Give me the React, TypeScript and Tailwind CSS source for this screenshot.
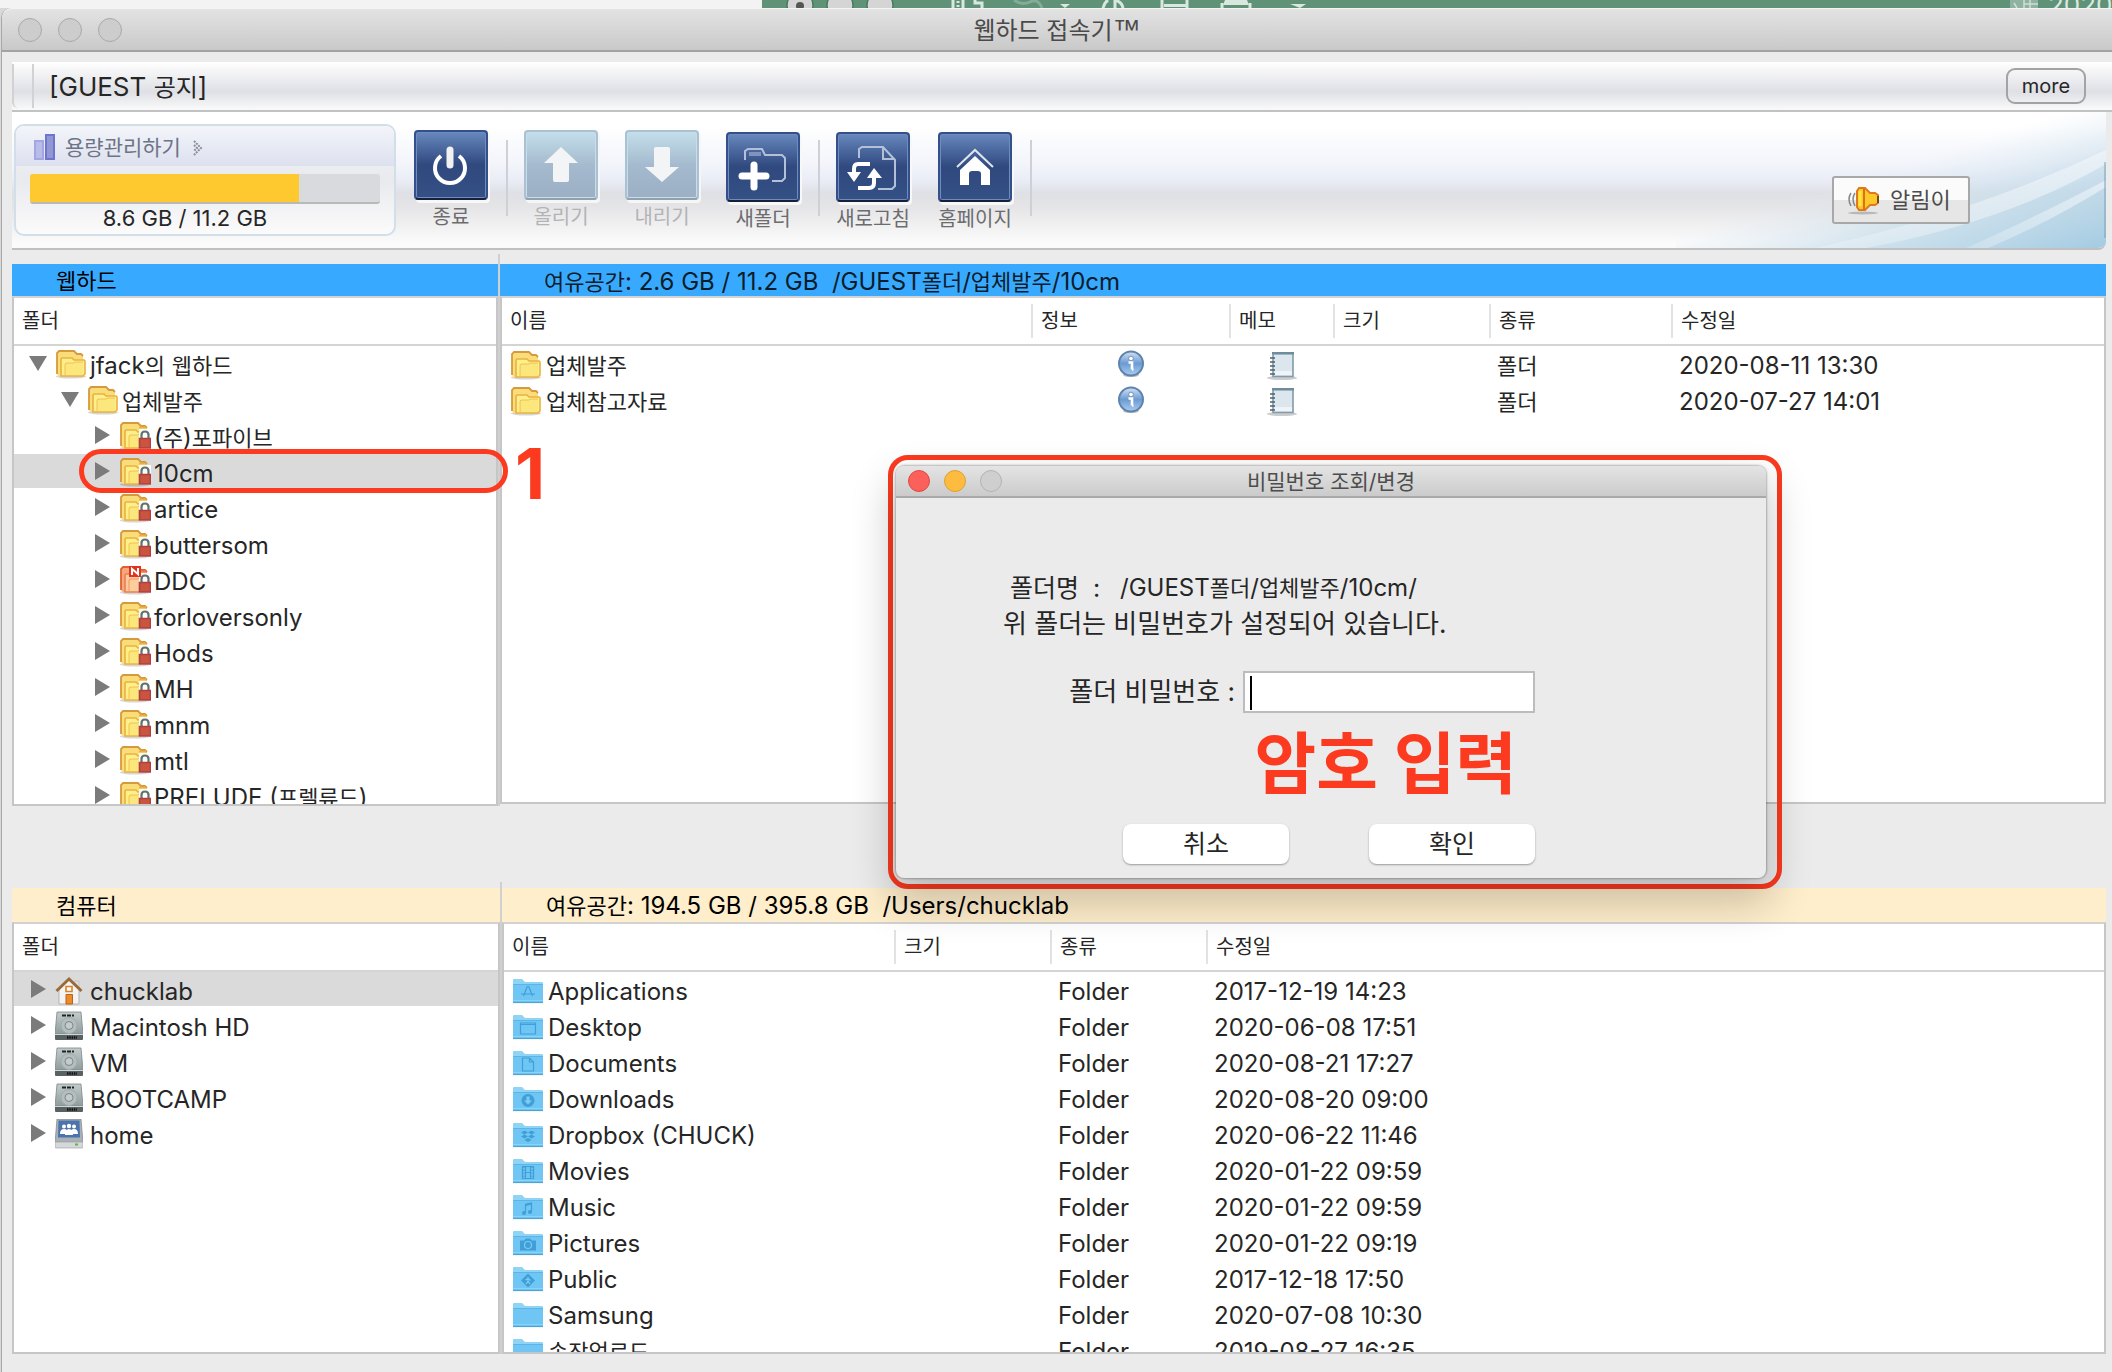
import React from 'react';

const KO = /([\uac00-\ud7a3]+)/;

/** Latin text keeps the parent's size; Hangul runs are set two pixels smaller. */
function Mixed({ text, ko = 'text-[22px] leading-none' }: { text: string; ko?: string }) {
  return (
    <span className="whitespace-pre">
      {text.split(KO).map((part, i) =>
        KO.test(part) ? (
          <span key={i} className={ko}>
            {part}
          </span>
        ) : (
          part
        ),
      )}
    </span>
  );
}

/* ---------- small icons ---------- */

function YellowFolder({ locked = false, fresh = false }: { locked?: boolean; fresh?: boolean }) {
  const edge = fresh ? '#e0602f' : '#d59a3c';
  const fill = fresh ? '#f8a77c' : '#fbdc7a';
  const front = fresh ? '#fcc9a4' : '#fdf08c';
  const mid = fresh ? '#ee7f4c' : '#e9b23f';
  return (
    <svg width="32" height="30" viewBox="0 0 32 30" className="mt-1 shrink-0" aria-hidden="true">
      <ellipse cx="16" cy="26.500" rx="15" ry="2" fill="#000" opacity=".16" />
      <path d="M2 24V3l2-2h15l3 3h4l2 2v17l-2 3H4z" fill={fill} />
      <path d="M2 24V3l2-2h15l3 3h4l2 2" fill="none" stroke={edge} strokeWidth="1.800" />
      <path d="M6 26V9l1-1h10l2 2h10l1 1v13l-2 2z" fill={front} stroke={mid} strokeWidth="1.600" />
      <path d="M10 25V14l1-1h8l1-1h8v13z" fill="#fbe57a" opacity={fresh ? '.2' : '.9'} />
      <path d="M10 25V14l1-1h8l1-1h8" fill="none" stroke={mid} strokeWidth="1" opacity=".7" />
      {locked && (
        <g>
          <path d="M20 7h12v20H20z" fill="#fff" opacity=".9" />
          <path d="M20 5.500h7" stroke={mid} strokeWidth="1.800" />
          <path d="M22.500 17v-4q0-3.500 3.500-3.500t3.500 3.500v4" fill="none" stroke="#5c7478" strokeWidth="2.200" />
          <path d="M20.500 16.500h11v9.500h-11z" fill="#c9553f" stroke="#b03e44" strokeWidth="1.600" />
        </g>
      )}
      {fresh && (
        <g>
          <path d="M10 0h12v11H10z" fill="#e0341f" />
          <path d="M13 9V3l6 5V2" fill="none" stroke="#fff" strokeWidth="2" />
        </g>
      )}
    </svg>
  );
}

const glyphs: Record<string, React.ReactNode> = {
  Applications: <path d="M14.500 6.500l-4 10M15.500 6.500l4 10M8 14.500h14" />,
  Desktop: <path d="M7.500 7.500h15v11h-15zM7.500 9h15" />,
  Documents: <path d="M9.500 6.500h7l4 4v9h-11zM16.500 6.500v4h4" />,
  Downloads: (
    <g>
      <circle cx="15" cy="13" r="6.500" fill="#3f9fd6" stroke="none" />
      <path d="M15 9v4.500" stroke="#7ccbf5" strokeWidth="3" />
      <path d="M11 13h8l-4 4z" fill="#7ccbf5" stroke="none" />
    </g>
  ),
  'Dropbox (CHUCK)': (
    <path
      d="M11.500 7l3.500 2-3.500 2-3.500-2zM18.500 7l3.500 2-3.500 2-3.500-2zM11.500 11l3.500 2-3.500 2-3.500-2zM18.500 11l3.500 2-3.500 2-3.500-2zM11.500 16.500l3.500-2 3.500 2-3.500 2z"
      fill="#3f9fd6"
      stroke="none"
    />
  ),
  Movies: (
    <g>
      <path d="M9.500 7h11v12h-11zM12.500 7v12M17.500 7v12M12.500 13h5" />
      <path d="M11 7v12M19 7v12" strokeDasharray="1.500 1.500" />
    </g>
  ),
  Music: (
    <g>
      <path d="M12.500 17V9l6-1.500V16" />
      <path d="M12.500 9.500l6-1.500" strokeWidth="2" />
      <circle cx="11" cy="17.500" r="2" fill="#3f9fd6" stroke="none" />
      <circle cx="17" cy="16.500" r="2" fill="#3f9fd6" stroke="none" />
    </g>
  ),
  Pictures: (
    <g>
      <path d="M7 9h4l2-2h4l2 2h4v10H7z" fill="#3f9fd6" stroke="none" />
      <circle cx="15" cy="13.500" r="3.500" stroke="#7ccbf5" />
    </g>
  ),
  Public: (
    <g>
      <path d="M15 6l7 7-7 7-7-7z" fill="#3f9fd6" stroke="none" />
      <path d="M15 9.500v4l-2 3M15 13.500l2 3M12.500 12.500l2.500-1.500 2.500 2" stroke="#7ccbf5" />
    </g>
  ),
};

function BlueFolder({ name }: { name: string }) {
  return (
    <svg width="30" height="26" viewBox="0 0 30 26" className="mt-0.5 shrink-0" aria-hidden="true">
      <path d="M0 24V2q0-1 1-1h8l3 3h17q1 0 1 1v19z" fill="#8fd3f5" />
      <path d="M0 7h30v17q0 1-1 1H1q-1 0-1-1z" fill="#6fc6f4" />
      <path d="M0 22.500h30" stroke="#8ad4fb" strokeWidth="1" />
      <path d="M0 24.500h30" stroke="#4ea3cf" strokeWidth="1.200" />
      <path d="M0 6.500h30" stroke="#5bb5e6" strokeWidth="1" />
      <g transform="translate(0 1.500)" fill="none" stroke="#3f9fd6" strokeWidth="1.200">
        {glyphs[name]}
      </g>
    </svg>
  );
}

function InfoIcon() {
  return (
    <svg width="28" height="28" viewBox="0 0 28 28" aria-hidden="true">
      <defs>
        <linearGradient id="info" x1="0" y1="0" x2="0" y2="1">
          <stop offset="0" stopColor="#d2e2f4" />
          <stop offset=".5" stopColor="#6c9bd2" />
          <stop offset="1" stopColor="#a9cdf0" />
        </linearGradient>
      </defs>
      <ellipse cx="14" cy="25" rx="8" ry="2" fill="#000" opacity=".25" />
      <circle cx="14" cy="13.500" r="12" fill="url(#info)" stroke="#5f83ad" strokeWidth="2" />
      <circle cx="14" cy="8.500" r="2.300" fill="#fff" stroke="#5f83ad" strokeWidth=".8" />
      <path d="M11.500 12.500h3.500v7M15 19.500h1.500" stroke="#fff" strokeWidth="2.600" fill="none" />
    </svg>
  );
}

function MemoIcon() {
  return (
    <svg width="32" height="30" viewBox="0 0 32 30" aria-hidden="true">
      <ellipse cx="16" cy="27" rx="15" ry="2" fill="#000" opacity=".2" />
      <path d="M7 2.500h20v23H7z" fill="#dbe6ed" stroke="#7f9dae" strokeWidth="1.600" />
      <path d="M6 2.200h22" stroke="#6f8c9c" strokeWidth="2.400" />
      <path d="M9 20h17v4H9z" fill="#eef4f7" />
      <path d="M4 7h5M4 11h5M4 15h5M4 19h5M4 23h5" stroke="#50626d" strokeWidth="1.500" />
    </svg>
  );
}

function HomeIcon() {
  return (
    <svg width="28" height="30" viewBox="0 0 28 30" className="mt-1 shrink-0" aria-hidden="true">
      <path d="M20 5h4v6h-4z" fill="#ddd" stroke="#bbb" strokeWidth=".6" />
      <path d="M4 14L14 4l10 10v14H4z" fill="#f4f4f4" stroke="#b5b5b5" strokeWidth="1" />
      <path d="M1.500 15L14 3l12.500 12" fill="none" stroke="#9a6a3a" strokeWidth="3" />
      <path d="M11 10.500h6v5h-6z" fill="#fff" stroke="#d9822b" strokeWidth="1.600" />
      <path d="M11 18.500h6.500V28H11z" fill="#ee8a2a" stroke="#b8651c" strokeWidth="1" />
    </svg>
  );
}

function DiskIcon() {
  return (
    <svg width="28" height="30" viewBox="0 0 28 30" className="mt-0.5 shrink-0" aria-hidden="true">
      <defs>
        <linearGradient id="disk" x1="0" y1="0" x2="0" y2="1">
          <stop offset="0" stopColor="#c3cccd" />
          <stop offset="1" stopColor="#8f9b9c" />
        </linearGradient>
      </defs>
      <path d="M2 1h24l2 22H0z" fill="url(#disk)" stroke="#7c8687" strokeWidth=".8" />
      <path d="M0 23h28v5q0 1-1 1H1q-1 0-1-1z" fill="#5a6162" />
      <path d="M0 23.500h28" stroke="#cfd6d7" />
      <path d="M7 4.500h12" stroke="#222" strokeWidth="2" strokeDasharray="4 1" />
      <circle cx="14" cy="14.500" r="8" fill="#b4bebf" stroke="#a0abac" />
      <circle cx="14" cy="14.500" r="4" fill="#c3cbcc" stroke="#7c8687" />
      <path d="M12 26.500h10" stroke="#111" strokeWidth="2.500" strokeDasharray="1.500 .8" />
    </svg>
  );
}

function ShareDiskIcon() {
  return (
    <svg width="28" height="30" viewBox="0 0 28 30" className="mt-0.5 shrink-0" aria-hidden="true">
      <path d="M2 0h24l2 24H0z" fill="#a9b0b6" stroke="#858c92" strokeWidth=".8" />
      <path d="M3.500 1.500h21l.5 17H3z" fill="#4a74ab" />
      <path d="M0 23h28v5q0 1-1 1H1q-1 0-1-1z" fill="#d5d8da" stroke="#999" strokeWidth=".6" />
      <g fill="#fff">
        <circle cx="9" cy="7.500" r="2" />
        <circle cx="14" cy="7" r="2.200" />
        <circle cx="19" cy="7.500" r="2" />
        <path d="M5 15q0-5 4-5t4 5zM15 15q0-5 4-5t4 5zM10 16q0-6 4-6t4 6z" />
      </g>
      <path d="M20 25.500h3" stroke="#5fb548" strokeWidth="2" />
    </svg>
  );
}

function Triangle({ open }: { open?: boolean }) {
  return (
    <svg width="18" height="18" viewBox="0 0 18 18" className="shrink-0" aria-hidden="true">
      <path d={open ? 'M0 2h18L9 17z' : 'M2 0v18l15-9z'} fill="#7b7b7b" />
    </svg>
  );
}

/* ---------- window chrome ---------- */

function Light({ className }: { className: string }) {
  return <span className={`block rounded-full border ${className}`} />;
}

function BackgroundWindow() {
  return (
    <div className="flex h-2 shrink-0 overflow-hidden bg-[#f3f3f3]" aria-hidden="true">
      <div className="w-[762px] shrink-0" />
      <div className="flex flex-1 justify-between overflow-hidden bg-[#5f9277]">
        <svg width="560" height="8" viewBox="0 0 560 8">
          <g fill="#d5d5d5" stroke="#497a60" strokeWidth="1.500">
            <circle cx="38" cy="5" r="13" />
            <circle cx="78" cy="5" r="13" />
            <circle cx="118" cy="5" r="13" />
          </g>
          <circle cx="38" cy="6" r="4" fill="#555" />
          <g fill="none" stroke="#d9e8df" strokeWidth="3">
            <path d="M191 0v8M201 8V0M213 0v3h7v5" />
            <path d="M196 1v7" strokeDasharray="2 2" />
            <path d="M252 0q8 6 16 2t12 6" opacity=".3" />
            <path d="M341 8q1-5 5-8M361 8q-1-6-8-8v8" />
            <path d="M400 0v8M425 0v8M402 5.500h22" />
            <path d="M460 8V3M488 8V3" />
          </g>
          <path d="M463 0h22l2 5h-26z" fill="#d9e8df" />
          <path d="M298 4h10l-5 4zM528 4h16l-6 4z" fill="#d9e8df" />
        </svg>
        <div className="flex">
          <svg width="28" height="8" viewBox="0 0 28 8">
            <path d="M0 0h28v8H0z" fill="#8fb3a0" />
            <path d="M4 3l3 5M14 0v8M20 0v8M14 4h14" stroke="#cfe0d6" strokeWidth="1.500" />
          </svg>
          <span className="w-[74px] overflow-hidden pl-2.5 text-[26px] leading-[10px] text-[#dbe8e0]">2020</span>
        </div>
      </div>
    </div>
  );
}

/* ---------- toolbar ---------- */

type ToolProps = { label: string; disabled?: boolean; low?: boolean; children: React.ReactNode };

function Tool({ label, disabled, low, children }: ToolProps) {
  return (
    <button
      type="button"
      disabled={disabled}
      className={`flex w-[74px] flex-col items-center ${low ? 'mt-5' : 'mt-[18px]'}`}
    >
      <span
        className={
          disabled
            ? 'block h-[70px] w-[74px] rounded-[4px] border-2 border-[#a9c1d2] border-b-[#8fa0af] bg-linear-to-b from-[#c3dfea] via-[#a5bace] to-[#9cafc4] shadow-[inset_0_0_0_1px_#c8dde8,2px_3px_0_#f6f6f6]'
            : 'block h-[70px] w-[74px] rounded-[4px] border-2 border-[#34508c] border-b-[#16203c] bg-linear-to-b from-[#6788be] via-[#30497f] to-[#345084] shadow-[inset_0_0_0_1px_#6f8cbb,2px_3px_0_#f8f8f8]'
        }
      >
        <svg width="70" height="66" viewBox="0 0 70 66" aria-hidden="true">
          {children}
        </svg>
      </span>
      <span
        className={`mt-[5px] text-[20px] leading-6 whitespace-nowrap ${disabled ? 'text-[#b3b3b5]' : 'text-[#6c6c6e]'}`}
      >
        {label}
      </span>
    </button>
  );
}

function Separator() {
  return <div className="mr-4 ml-[18px] mt-7 h-[76px] w-0.5 bg-[#cfd0d5]" />;
}

function Capacity() {
  return (
    <section className="ml-0.5 mt-3 h-28 w-[382px] overflow-hidden rounded-[10px] border-2 border-[#d3dfe8] bg-linear-to-b from-[#f4f5f9] via-[#e9eaee] to-[#fbfbfb]">
      <div className="flex h-10 items-center bg-linear-to-b from-[#f3f5fa] to-[#dde1ee] pt-1 pl-[17px]">
        <svg width="24" height="30" viewBox="0 0 24 30" aria-hidden="true">
          <path d="M2 8h8v18H2z" fill="#b9bbe8" stroke="#a3a6e2" strokeWidth="2" />
          <path d="M13 2h8v24h-8z" fill="#9197d5" stroke="#6f75cc" strokeWidth="2" />
        </svg>
        <a href="#capacity" className="ml-2 flex items-center text-[21px] leading-6 text-[#6d7487]">
          용량관리하기
          <svg width="10" height="16" viewBox="0 0 10 16" className="ml-3" aria-hidden="true">
            <path d="M1 1l7 7-7 7M1 5l3 3-3 3" fill="none" stroke="#8b8f99" strokeWidth="2" strokeDasharray="2 1" />
          </svg>
        </a>
      </div>
      <div
        role="progressbar"
        aria-label="용량"
        aria-valuenow={8.6}
        aria-valuemax={11.2}
        className="mx-3.5 mt-2 h-[30px] overflow-hidden rounded-[3px] border-b-2 border-[#b9b9bb] bg-[#d9dadd]"
      >
        <div className="h-full bg-[#fec92f]" style={{ width: `${(8.6 / 11.2) * 100}%` }} />
      </div>
      <p className="mt-0.5 pr-10 text-center text-[22px] leading-6 text-[#262626]">8.6 GB / 11.2 GB</p>
    </section>
  );
}

function Toolbar() {
  return (
    <div className="relative mr-1.5 ml-3 flex h-[138px] shrink-0 items-start overflow-hidden rounded-br-lg border-b-2 border-[#bfc0c2] bg-[linear-gradient(#fff_10%,#f3f5fb_38%,#e9ecf5_51%,#dfe0e5_60%,#e5e5e7_70%,#fbfbfb_96%)]">
      <svg className="absolute right-0 bottom-0" width="430" height="136" viewBox="0 0 430 136" aria-hidden="true">
        <defs>
          <linearGradient id="sky" x1="0" y1="0" x2="1" y2="1">
            <stop offset=".45" stopColor="#dfeaf3" stopOpacity="0" />
            <stop offset=".72" stopColor="#c5dcea" stopOpacity=".85" />
            <stop offset="1" stopColor="#a3cbe2" />
          </linearGradient>
          <linearGradient id="ray" x1="0" y1="0" x2="1" y2="0">
            <stop offset="0" stopColor="#fff" stopOpacity=".2" />
            <stop offset="1" stopColor="#f4f7fb" stopOpacity=".6" />
          </linearGradient>
        </defs>
        <path d="M0 0h430v136H0z" fill="url(#sky)" />
        <path d="M140 136Q300 100 430 38v14Q330 110 190 136z" fill="url(#ray)" />
        <path d="M290 136Q370 100 430 68v7Q370 112 312 136z" fill="url(#ray)" />
        <path d="M429 50v76" stroke="#7f9fb8" strokeWidth="2" opacity=".5" />
      </svg>
      <Capacity />
      <div className="ml-[18px] flex">
        <Tool label="종료">
          <path d="M25 24a15 15 0 1 0 18 0" fill="none" stroke="#fff" strokeWidth="4" />
          <path d="M34 18v15" stroke="#f1f1f1" strokeWidth="7" strokeLinecap="round" />
        </Tool>
        <Separator />
        <div className="flex gap-[27px]">
          <Tool label="올리기" disabled>
            <path d="M35 15l17 16h-9v17q0 2-2 2H29q-2 0-2-2V31h-9z" fill="#f3f4f6" />
          </Tool>
          <Tool label="내리기" disabled>
            <path d="M35 50L18 35h9V17q0-2 2-2h12q2 0 2 2v18h9z" fill="#f3f4f6" />
          </Tool>
          <Tool label="새폴더" low>
            <path d="M17 26V17l3-2h14l3 6h17l3 3v20l-3 3H44" fill="none" stroke="#b3c0d8" strokeWidth="2" />
            <path d="M21 20h12" stroke="#7f93bd" strokeWidth="4" />
            <path d="M26 31v22M14 42h24" stroke="#fff" strokeWidth="7" strokeLinecap="round" />
          </Tool>
        </div>
        <Separator />
        <div className="flex gap-7">
          <Tool label="새로고침" low>
            <path d="M21 24v-9l3-2h21l12 13v26l-3 3H40M45 13v12h12" fill="none" stroke="#b3c0d8" strokeWidth="2" />
            <path d="M32 30H20q-4 0-4 5v6M20 54h11q5 0 5-5v-7" fill="none" stroke="#fff" strokeWidth="4" />
            <path d="M9 38h14l-7 10zM29 44h15l-8-10z" fill="#fff" />
          </Tool>
          <Tool label="홈페이지" low>
            <path d="M17 33L35 16l18 17" fill="none" stroke="#dfe5ef" strokeWidth="2" />
            <path d="M35 22l15 14v15h-9V40q0-3-3-3h-6q-3 0-3 3v11h-9V36z" fill="#fff" />
          </Tool>
        </div>
        <Separator />
      </div>
      <button
        type="button"
        className="relative mt-16 mr-[136px] ml-auto flex h-12 w-[138px] items-center gap-2.5 rounded-[3px] border-2 border-[#a8a8a8] bg-linear-to-b from-[#fbfbfb] from-50% to-[#e6e6e6] to-50% pl-3 text-[22px] leading-6 text-[#4c4c4c]"
      >
        <svg width="34" height="32" viewBox="0 0 34 32" aria-hidden="true">
          <ellipse cx="17" cy="29" rx="15" ry="1.500" fill="#9a9a9a" opacity=".6" />
          <path d="M5 9q-4 6 0 13M9 9q-4 6 0 13" fill="none" stroke="#888" strokeWidth="1.500" />
          <path d="M13 4h6l5 5h5l3 2v8l-3 2h-5l-5 5h-6l-2-3V7z" fill="#fdc92a" stroke="#e0791d" strokeWidth="2" />
          <path d="M18 4v22" stroke="#d9721a" strokeWidth="2" />
          <path d="M14 7v15" stroke="#ffe640" strokeWidth="3" />
          <path d="M32 12v7" stroke="#7a4a12" strokeWidth="2" />
        </svg>
        알림이
      </button>
    </div>
  );
}

/* ---------- trees ---------- */

type Node = {
  name: string;
  level: number;
  open?: boolean;
  selected?: boolean;
  icon: React.ReactNode;
};

const lock = <YellowFolder locked />;

const remoteTree: Node[] = [
  { name: 'jfack의 웹하드', level: 0, open: true, icon: <YellowFolder /> },
  { name: '업체발주', level: 1, open: true, icon: <YellowFolder /> },
  { name: '(주)포파이브', level: 2, icon: lock },
  { name: '10cm', level: 2, selected: true, icon: lock },
  { name: 'artice', level: 2, icon: lock },
  { name: 'buttersom', level: 2, icon: lock },
  { name: 'DDC', level: 2, icon: <YellowFolder locked fresh /> },
  { name: 'forloversonly', level: 2, icon: lock },
  { name: 'Hods', level: 2, icon: lock },
  { name: 'MH', level: 2, icon: lock },
  { name: 'mnm', level: 2, icon: lock },
  { name: 'mtl', level: 2, icon: lock },
  { name: 'PRELUDE (프렐류드)', level: 2, icon: lock },
];

const localTree: Node[] = [
  { name: 'chucklab', level: 0, selected: true, icon: <HomeIcon /> },
  { name: 'Macintosh HD', level: 0, icon: <DiskIcon /> },
  { name: 'VM', level: 0, icon: <DiskIcon /> },
  { name: 'BOOTCAMP', level: 0, icon: <DiskIcon /> },
  { name: 'home', level: 0, icon: <ShareDiskIcon /> },
];

const indent = ['pl-[15px]', 'pl-[47px]', 'pl-[79px]'];

function Tree({ nodes }: { nodes: Node[] }) {
  return (
    <ul className="text-[24px] leading-[34px]">
      {nodes.map((n) => (
        <li key={n.name} className={`mb-0.5 flex h-[34px] items-center ${indent[n.level]} ${n.selected ? 'bg-[#dadada]' : ''}`}>
          <button type="button" aria-label={`${n.name} 펼치기`} aria-expanded={!!n.open} className="mr-2">
            <Triangle open={n.open} />
          </button>
          <span className="flex w-[35px] shrink-0">{n.icon}</span>
          <span className="pt-1.5">
            <Mixed text={n.name} />
          </span>
        </li>
      ))}
    </ul>
  );
}

function TreePane({ title, titleClass, nodes }: { title: string; titleClass: string; nodes: Node[] }) {
  return (
    <>
      <h2 className={`flex shrink-0 items-center pt-0.5 pl-11 text-[22px] leading-8 text-black ${titleClass}`}>{title}</h2>
      <div className="flex min-h-0 flex-1 flex-col overflow-hidden border-2 border-[#c6c6c6] border-t-[#d2d2d2] bg-white">
        <div className="h-12 shrink-0 border-b-2 border-[#d4d4d4] pl-2 text-[20px] leading-[46px]">폴더</div>
        <Tree nodes={nodes} />
      </div>
    </>
  );
}

/* ---------- file tables ---------- */

function HeadCell({ label, first }: { label: string; first?: boolean }) {
  return (
    <th scope="col" className="h-12 border-b-2 border-[#d4d4d4] p-0 text-left text-[20px] font-normal">
      <div className={first ? 'pl-2 leading-[34px]' : 'border-l-2 border-[#e2e2e2] pl-2 leading-[34px]'}>{label}</div>
    </th>
  );
}

function Cell({ children }: { children?: React.ReactNode }) {
  return <td className="p-0 pt-1 pl-2">{children}</td>;
}

const remoteFiles = [
  { name: '업체발주', date: '2020-08-11 13:30' },
  { name: '업체참고자료', date: '2020-07-27 14:01' },
];

const localFiles = [
  { name: 'Applications', date: '2017-12-19 14:23' },
  { name: 'Desktop', date: '2020-06-08 17:51' },
  { name: 'Documents', date: '2020-08-21 17:27' },
  { name: 'Downloads', date: '2020-08-20 09:00' },
  { name: 'Dropbox (CHUCK)', date: '2020-06-22 11:46' },
  { name: 'Movies', date: '2020-01-22 09:59' },
  { name: 'Music', date: '2020-01-22 09:59' },
  { name: 'Pictures', date: '2020-01-22 09:19' },
  { name: 'Public', date: '2017-12-18 17:50' },
  { name: 'Samsung', date: '2020-07-08 10:30' },
  { name: '송장업로드', date: '2019-08-27 16:35' },
];

function RemoteTable() {
  return (
    <table className="w-full table-fixed border-separate border-spacing-0">
      <colgroup>
        <col className="w-[529px]" />
        <col className="w-[198px]" />
        <col className="w-[104px]" />
        <col className="w-[156px]" />
        <col className="w-[182px]" />
        <col />
      </colgroup>
      <thead>
        <tr>
          <HeadCell label="이름" first />
          <HeadCell label="정보" />
          <HeadCell label="메모" />
          <HeadCell label="크기" />
          <HeadCell label="종류" />
          <HeadCell label="수정일" />
        </tr>
      </thead>
      <tbody className="text-[24px] leading-8">
        {remoteFiles.map((f) => (
          <tr key={f.name} className="h-9">
            <td className="p-0 pl-2">
              <span className="flex h-9 items-center">
                <YellowFolder />
                <span className="ml-1 pt-1">
                  <Mixed text={f.name} />
                </span>
              </span>
            </td>
            <td className="p-0 pl-0.5">
              <span className="flex justify-center">
                <InfoIcon />
              </span>
            </td>
            <td className="p-0 pl-0.5">
              <span className="flex justify-center pt-1">
                <MemoIcon />
              </span>
            </td>
            <Cell />
            <Cell>
              <Mixed text="폴더" />
            </Cell>
            <Cell>{f.date}</Cell>
          </tr>
        ))}
      </tbody>
    </table>
  );
}

function LocalTable() {
  return (
    <table className="w-full table-fixed border-separate border-spacing-0">
      <colgroup>
        <col className="w-[390px]" />
        <col className="w-[156px]" />
        <col className="w-[156px]" />
        <col />
      </colgroup>
      <thead>
        <tr>
          <HeadCell label="이름" first />
          <HeadCell label="크기" />
          <HeadCell label="종류" />
          <HeadCell label="수정일" />
        </tr>
      </thead>
      <tbody className="text-[24px] leading-8">
        {localFiles.map((f) => (
          <tr key={f.name} className="h-9">
            <td className="p-0 pl-[9px]">
              <span className="flex h-9 items-center">
                <BlueFolder name={f.name} />
                <span className="ml-[5px] pt-1">
                  <Mixed text={f.name} />
                </span>
              </span>
            </td>
            <Cell />
            <Cell>Folder</Cell>
            <Cell>{f.date}</Cell>
          </tr>
        ))}
      </tbody>
    </table>
  );
}

/* ---------- password dialog ---------- */

function PasswordDialog() {
  return (
    <div className="absolute top-[455px] left-[888px] rounded-[20px] border-[5px] border-[#fc3a1f] pt-1.5 pr-[11px] pb-1.5 pl-[3px]">
      <div
        role="dialog"
        aria-labelledby="dialog-title"
        className="flex h-[412px] w-[870px] flex-col rounded-[8px] bg-[#ebebeb] shadow-[0_20px_40px_6px_rgba(0,0,0,0.2),0_0_2px_1px_rgba(0,0,0,0.25)]"
      >
        <div className="grid h-8 shrink-0 grid-cols-[1fr_auto_1fr] items-center rounded-t-[8px] border-b-2 border-[#a9a9a9] bg-linear-to-b from-[#e4e4e4] to-[#cbcbcb]">
          <div className="flex gap-3.5 pl-3">
            <Light className="size-[22px] border-[#df483f] bg-[#fc605b]" />
            <Light className="size-[22px] border-[#dfa032] bg-[#fdbc40]" />
            <Light className="size-[22px] border-[#b3b3b3] bg-[#cfcfcf]" />
          </div>
          <h2 id="dialog-title" className="pt-0.5 text-[21px] leading-7 text-[#4d4d4d]">
            비밀번호 조회/변경
          </h2>
        </div>
        <div className="pt-[72px] text-[24px] leading-9 text-[#262626]">
          <p className="flex pl-[114px]">
            <span className="w-[110px] text-[25px] whitespace-pre">폴더명  :</span>
            <Mixed text="/GUEST폴더/업체발주/10cm/" />
          </p>
          <p className="pl-[107px] text-[26px]">위 폴더는 비밀번호가 설정되어 있습니다.</p>
        </div>
        <div className="mt-[29px] flex items-center justify-end pr-[231px]">
          <label htmlFor="folder-password" className="mr-2 text-[26px] leading-[42px] whitespace-pre text-[#262626]">
            폴더 비밀번호 :
          </label>
          <div className="relative">
            <input
              id="folder-password"
              type="password"
              className="block h-[42px] w-[292px] border-2 border-[#bcbcbc] bg-white px-2 text-[24px] outline-none"
            />
            <span className="absolute top-[5px] left-[7px] h-[34px] w-0.5 bg-black" />
          </div>
        </div>
        <p className="pt-0.5 pr-[249px] text-right text-[67px] leading-[98px] font-bold text-[#fc3a1f]">암호 입력</p>
        <div className="mt-[11px] flex justify-end gap-20 pr-[231px] text-[25px] leading-10 text-[#262626]">
          <button type="button" className="h-10 w-[166px] rounded-[8px] bg-white shadow-[0_1px_2px_0_rgba(0,0,0,0.35)]">
            취소
          </button>
          <button type="button" className="h-10 w-[166px] rounded-[8px] bg-white shadow-[0_1px_2px_0_rgba(0,0,0,0.35)]">
            확인
          </button>
        </div>
      </div>
    </div>
  );
}

/* ---------- page ---------- */

export default function App() {
  return (
    <div className="relative flex h-screen flex-col overflow-hidden bg-[#d8d8d8] font-['Inter','Noto_Sans_CJK_KR',sans-serif] text-[#262626]">
      <BackgroundWindow />
      <main className="ml-px flex min-h-0 flex-1 flex-col rounded-tl-[10px] border-l border-[#a8a8a8] bg-[#ebebeb]">
        <header className="grid h-11 shrink-0 grid-cols-[1fr_auto_1fr] items-center rounded-tl-[10px] border-t border-b-2 border-t-[#f4f4f4] border-b-[#a3a3a3] bg-linear-to-b from-[#e3e3e3] to-[#c9c9c9]">
          <div className="flex gap-4 pl-4">
            <Light className="size-6 border-[#a9a9a9] bg-[#cdcdcd]" />
            <Light className="size-6 border-[#a9a9a9] bg-[#cdcdcd]" />
            <Light className="size-6 border-[#a9a9a9] bg-[#cdcdcd]" />
          </div>
          <h1 className="pt-0.5 text-[24px] leading-8 text-[#4a4a4a]">
            웹하드 접속기
            <span className="font-['Liberation_Sans',sans-serif] text-[28px] leading-none">™</span>
          </h1>
        </header>

        <div className="mt-2.5 ml-2.5 flex h-[50px] shrink-0 items-center border-b-2 border-[#c2c2c4] bg-linear-to-b from-white via-[#dfe0e5] via-62% to-[#fafafa] pr-[26px]">
          <div className="h-11 w-[22px] rounded-bl-md border-r-2 border-l-2 border-[#d2d2d4]" />
          <p className="ml-[15px] pt-0.5 text-[26px] leading-8">
            <Mixed text="[GUEST 공지]" ko="text-[24px] leading-none" />
          </p>
          <button type="button" className="ml-auto h-9 w-20 rounded-[9px] border-2 border-[#a3a3a5] text-[20px] leading-8 text-[#262626]">
            more
          </button>
        </div>

        <div className="-ml-0.5">
          <Toolbar />
        </div>

        <section className="relative mt-1 mr-1.5 ml-2.5 flex h-[552px] shrink-0">
          <div className="flex w-[486px] flex-col pt-2.5">
            <TreePane title="웹하드" titleClass="h-8 bg-[#37aaff]" nodes={remoteTree} />
          </div>
          <div className="w-0.5 bg-[#d0d0d0]" />
          <div className="mb-0.5 flex min-w-0 flex-1 flex-col pt-2.5">
            <h2 className="h-8 shrink-0 bg-[#37aaff] pl-11 text-[24px] leading-9 text-[#0c1c2a]">
              <Mixed text="여유공간: 2.6 GB / 11.2 GB  /GUEST폴더/업체발주/10cm" />
            </h2>
            <div className="min-h-0 flex-1 overflow-hidden border-2 border-[#c6c6c6] border-t-[#d2d2d2] bg-white">
              <RemoteTable />
            </div>
          </div>
          <div className="pointer-events-none absolute top-[195px] left-[67px] h-11 w-[429px] rounded-full border-[5px] border-[#fc3a1f]" />
          <span className="absolute top-[184px] left-[503px] text-[70px] leading-[72px] font-bold text-[#fc3a1f]">1</span>
        </section>

        <section className="mt-[76px] mr-1.5 mb-[18px] ml-2.5 flex min-h-0 flex-1">
          <div className="flex w-[488px] flex-col pt-1.5">
            <TreePane title="컴퓨터" titleClass="h-[34px] bg-[#ffeecb]" nodes={localTree} />
          </div>
          <div className="w-0.5 bg-[#d0d0d0]" />
          <div className="flex min-w-0 flex-1 flex-col pt-1.5">
            <h2 className="h-[34px] shrink-0 bg-[#ffeecb] pl-11 text-[24px] leading-9 text-black">
              <Mixed text="여유공간: 194.5 GB / 395.8 GB  /Users/chucklab" />
            </h2>
            <div className="min-h-0 flex-1 overflow-hidden border-2 border-[#c6c6c6] border-t-[#d2d2d2] bg-white">
              <LocalTable />
            </div>
          </div>
        </section>
      </main>
      <PasswordDialog />
    </div>
  );
}
